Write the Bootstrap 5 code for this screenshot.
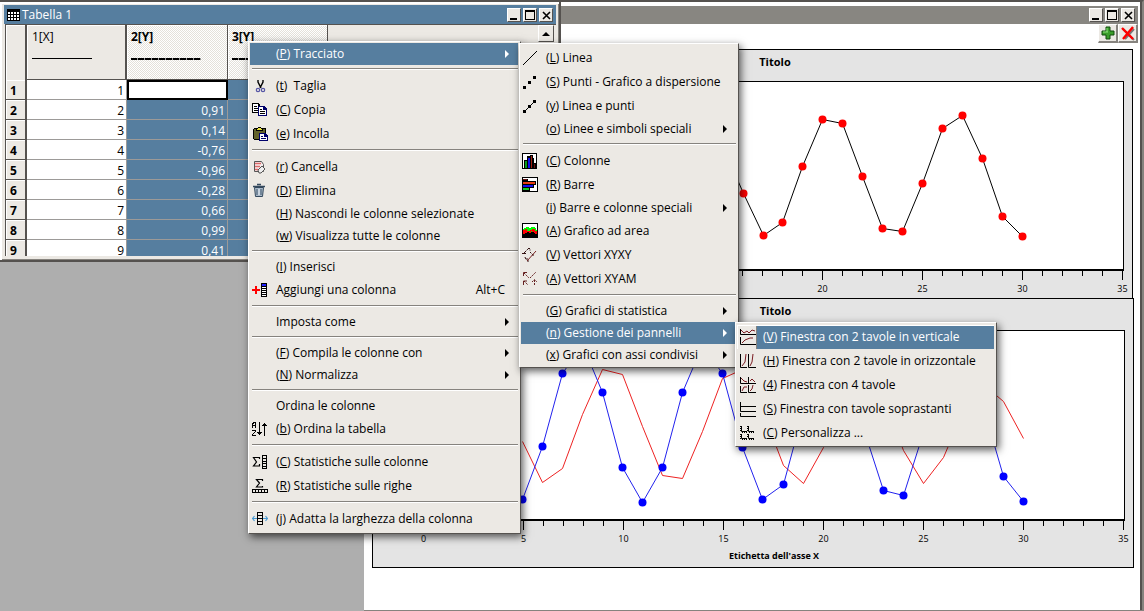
<!DOCTYPE html>
<html lang="it">
<head>
<meta charset="utf-8">
<meta name="viewport" content="width=device-width, initial-scale=1">
<title>Tabella 1</title>
<link href="https://cdn.jsdelivr.net/npm/bootstrap@5.3.0/dist/css/bootstrap.min.css" rel="stylesheet">
<style>
:root{--face:#ece9e4;--sel:#567e9f;--edge:#55524f;--shade:#86837e}
body{font-family:"Open Sans","Noto Sans",sans-serif;font-size:12px;line-height:20px;color:#000;background:#aeaeae}
.desktop{min-height:100vh}
svg{display:block;flex:none}
.win{position:absolute;top:0}
.win-table{left:0;width:561px;height:262px;background:var(--face);border:solid var(--edge);border-width:2px 2px 2px 0;box-shadow:inset 2px 2px 0 #fff,inset -1px -1px 0 var(--shade);padding:3px 3px 4px 4px;z-index:1}
.win-chart{left:364px;right:0;min-height:100vh;background:#fff;border-top:2px solid var(--edge);border-right:2px solid var(--shade);border-bottom:1px solid var(--shade);padding:4px 4px 0 8px}
.win-chart::after{content:"";position:absolute;top:0;bottom:0;right:0;width:2px;background:var(--edge)}
.titlebar{height:19px;color:#fff;padding:0 3px 0 2px;background:var(--sel)}
.titlebar.idle{background:#888681;margin-left:-8px;height:18px}
.caption-text{margin-left:2px}
.btn-row{gap:2px}
.wbtn,.tbtn{padding:0;border:1px solid;border-color:#fff var(--edge) var(--edge) #fff;background:var(--face);color:#000}
.wbtn{width:14px;height:14px}
.tbtn{width:20px;height:19px;border-width:1px 2px 2px 1px;border-color:#fff var(--shade) var(--shade) #fff}
.sheet{overflow:hidden;border:solid var(--edge);border-width:1px 0 0 1px;background:var(--face);margin-left:1px;min-height:0}
.grid{table-layout:fixed;width:322px;border-collapse:separate;border-spacing:0;flex:none}
.grid tbody th,.grid td{padding:2px 2px 0 0;height:20px;line-height:17px;overflow:hidden;white-space:nowrap}
.grid thead th{height:55px;vertical-align:top;padding:2px 0 0 5px;line-height:20px;border:solid var(--edge);border-width:0 2px 1px 0;box-shadow:inset 1px 1px 0 #fff;background:var(--face)}
.grid thead th.picked{border-right-width:1px;padding-left:4px;background:repeating-conic-gradient(#fff 0 25%,#e4e1da 0 50%) 0 0/2px 2px}
.grid thead th:first-child{border-bottom:0}
.grid tbody th{padding-left:4px;border:solid var(--edge);border-width:0 2px 1px 0;box-shadow:inset 1px 1px 0 #fff;background:var(--face)}
.grid td{text-align:right;background:#fff;border:solid #9c9a98;border-width:0 1px 1px 0}
.grid td.on{background:var(--sel);color:#fff}
.grid td.cursor{background:#fff;border:2px solid #000}
.rule-line{width:60px;height:1px;background:#000;margin-top:11px}
.picked .rule-line{width:70px;height:2px;background:repeating-linear-gradient(90deg,#000 0 6px,#999 6px 7px)}
.scroller{width:16px;height:17px;margin-right:2px}
.dropdown-menu.pop{min-width:0;padding:1px 2px 2px 1px;margin:0;border-radius:0;font-size:12px;color:#000;background:var(--face);border:1px solid;border-color:#fff var(--edge) var(--edge) #fff;box-shadow:2px 3px 8px rgba(0,0,0,.65)}
.pop .dropdown-item{display:flex;align-items:center;height:22px;padding:0 9px 0 2px;color:#000;line-height:20px;white-space:pre}
.pop .tall{height:24px}
.pop .dropdown-item.active{background:var(--sel);color:#fff}
.pop .pic{width:16px;height:16px;flex:none;margin-right:8px}
.pop .dropdown-divider{margin:3px 0 4px 2px;border-top:1px solid #86837e;border-bottom:1px solid #fff;opacity:1;height:2px}
.pop .arrow{margin-left:auto;width:0;height:0;border:solid transparent;border-width:4px 0 4px 4px;border-left-color:currentColor}
.m1{left:248px;top:41px;width:273px;z-index:10}
.m2{left:519px;top:43px;width:220px;z-index:11}
.m3{left:735px;top:322px;width:262px;z-index:12}
.dropdown-menu.m2,.dropdown-menu.m3{padding-top:2px;padding-bottom:1px}
.m2 .dropdown-item,.m3 .dropdown-item{padding-left:1px}
.m3 .pic{margin:0 7px 0 2px}
.m3 .dropdown-item.active{background:linear-gradient(90deg,var(--face) 19px,var(--shade) 19px,var(--shade) 20px,var(--sel) 20px);box-shadow:inset 1px 1px 0 #fff}
.panels{padding:6px 4px 0 0}
.panel{border:1px solid #000;background:#e4e4e4}
.panel.first{border-bottom:0;margin-right:1px}
.panel h2{font-size:11px;font-weight:700;line-height:20px;margin:0;text-align:center;padding:2px 0 9px 45px}
.axis-name{font-size:9px;font-weight:700;line-height:14px;text-align:center;padding:2px 0 4px 42px}
.chart{width:100%;height:auto}
.chart text{font-size:9px;text-anchor:middle}
</style>
</head>
<body>
<main class="desktop position-relative overflow-hidden">

<section class="win win-chart" aria-label="Grafico">
  <header class="titlebar idle d-flex justify-content-end align-items-center">
    <div class="btn-row d-flex">
      <button class="wbtn" aria-label="Riduci"><svg width="12" height="12"><path d="M2 9h7v2h-7z"/></svg></button>
      <button class="wbtn" aria-label="Ingrandisci"><svg width="12" height="12"><path fill-rule="evenodd" d="M1 1h10v10H1zM2 3v7h8V3z"/></svg></button>
      <button class="wbtn" aria-label="Chiudi"><svg width="12" height="12"><path d="M3 3l7 7M10 3l-7 7" stroke="#000" stroke-width="1.6"/></svg></button>
    </div>
  </header>
  <div class="d-flex justify-content-end">
    <button class="tbtn" aria-label="Aggiungi"><svg width="17" height="16"><path d="M7 2h4v4h4v4h-4v4H7v-4H3V6h4z" fill="#3a9e2a" stroke="#114a0c"/><path d="M8 7V3M4 7h5" stroke="#8be07a"/></svg></button>
    <button class="tbtn" aria-label="Elimina"><svg width="17" height="16"><path d="M4 4l11 11M15 4L6 14" stroke="#777" stroke-width="2"/><path d="M3 3l11 11M14 2L4 14" stroke="#f00" stroke-width="2.4"/></svg></button>
  </div>
  <div class="panels">
    <article class="panel first">
      <h2>Titolo</h2>
      <svg class="chart" viewBox="373 81 759 217" data-base="269" data-right="1123" data-labels="292" data-label-from="20">
        <g data-line="#000" data-dots="#f00" data-points="702,130 722,145 743,193 763,235 782,222 802,166 822,119 842,123 862,176 882,228 902,231 922,183 942,128 962,115 982,158 1002,216 1022,236"></g>
      </svg>
    </article>
    <article class="panel">
      <h2>Titolo</h2>
      <svg class="chart" viewBox="373 330 760 217" data-base="519" data-right="1124" data-labels="542" data-label-from="0">
        <g data-line="#e22" data-points="522,441 542,482 562,468 582,414 602,369 622,374 642,426 662,475 682,478 702,431 722,378 742,369 762,410 783,465 803,483 823,447 843,400 863,372 883,398 903,450 923,483 943,457 963,410 983,384 1003,401 1023,438"></g>
        <g data-line="#22e" data-dots="#00f" data-points="522,499 542,446 562,373 582,344 602,392 622,467 642,502 662,467 682,392 702,345 722,373 742,447 762,499 783,484 803,410 823,360 843,362 863,428 883,490 903,495 923,432 943,372 963,355 983,407 1003,476 1023,501"></g>
      </svg>
      <div class="axis-name">Etichetta dell'asse X</div>
    </article>
  </div>
</section>

<section class="win win-table d-flex flex-column" aria-label="Tabella 1">
  <header class="titlebar d-flex align-items-center">
    <svg width="14" height="14" shape-rendering="crispEdges"><path d="M1 1h13v12H1z"/><path fill="#fff" d="M2 4h2v2H2zM5 4h2v2H5zM8 4h2v2H8zM11 4h2v2h-2zM2 7h2v2H2zM5 7h2v2H5zM8 7h2v2H8zM11 7h2v2h-2zM2 10h2v2H2zM5 10h2v2H5zM8 10h2v2H8zM11 10h2v2h-2z"/></svg>
    <span class="caption-text me-auto">Tabella 1</span>
    <div class="btn-row d-flex">
      <button class="wbtn" aria-label="Riduci"><svg width="12" height="12"><path d="M2 9h7v2h-7z"/></svg></button>
      <button class="wbtn" aria-label="Ingrandisci"><svg width="12" height="12"><path fill-rule="evenodd" d="M1 1h10v10H1zM2 3v7h8V3z"/></svg></button>
      <button class="wbtn" aria-label="Chiudi"><svg width="12" height="12"><path d="M3 3l7 7M10 3l-7 7" stroke="#000" stroke-width="1.6"/></svg></button>
    </div>
  </header>
  <div class="sheet d-flex flex-grow-1 justify-content-between align-items-start">
    <table class="grid">
      <colgroup><col style="width:21px"><col style="width:100px"><col style="width:101px"><col style="width:100px"></colgroup>
      <thead><tr><th></th><th class="fw-normal">1[X]<div class="rule-line"></div></th><th class="picked">2[Y]<div class="rule-line"></div></th><th class="picked">3[Y]<div class="rule-line"></div></th></tr></thead>
      <tbody>
        <tr><th>1</th><td>1</td><td class="cursor"></td><td class="on"></td></tr>
        <tr><th>2</th><td>2</td><td class="on">0,91</td><td class="on"></td></tr>
        <tr><th>3</th><td>3</td><td class="on">0,14</td><td class="on"></td></tr>
        <tr><th>4</th><td>4</td><td class="on">-0,76</td><td class="on"></td></tr>
        <tr><th>5</th><td>5</td><td class="on">-0,96</td><td class="on"></td></tr>
        <tr><th>6</th><td>6</td><td class="on">-0,28</td><td class="on"></td></tr>
        <tr><th>7</th><td>7</td><td class="on">0,66</td><td class="on"></td></tr>
        <tr><th>8</th><td>8</td><td class="on">0,99</td><td class="on"></td></tr>
        <tr><th>9</th><td>9</td><td class="on">0,41</td><td class="on"></td></tr>
      </tbody>
    </table>
    <button class="wbtn scroller" aria-label="Scorri in alto"><svg width="14" height="14"><path d="M3 9l4-4 4 4z"/></svg></button>
  </div>
</section>

<ul class="dropdown-menu show pop m1">
  <li><button class="dropdown-item active"><span class="pic"></span>(<u>P</u>) Tracciato<i class="arrow"></i></button></li>
  <li><hr class="dropdown-divider"></li>
  <li><button class="dropdown-item tall"><svg class="pic" viewBox="0 0 16 16" fill="none"><path d="M6 2v2l3 6M11 2v2L8 10" stroke="#000" stroke-width="1.4"/><circle cx="6" cy="12" r="1.7" stroke="#5555a5" stroke-width="1.2"/><circle cx="11" cy="12" r="1.7" stroke="#5555a5" stroke-width="1.2"/></svg>(<u>t</u>)  Taglia</button></li>
  <li><button class="dropdown-item tall"><svg class="pic" viewBox="0 0 16 16" shape-rendering="crispEdges"><path d="M0 1h6l2 2v8H0z"/><path fill="#fff" d="M1 2h5v2h1v6H1z"/><path d="M2 4h3v1H2zM2 6h4v1H2zM2 8h4v1H2z"/><path fill="#00006a" d="M6 4h6l3 3v7H6z"/><path fill="#fff" d="M7 5h4v3h3v5H7z"/><path d="M8 7h2v1H8zM8 9h5v1H8zM8 11h5v1H8z"/></svg>(<u>C</u>) Copia</button></li>
  <li><button class="dropdown-item tall"><svg class="pic" viewBox="0 0 16 16" shape-rendering="crispEdges"><path d="M1 3l1-1h11l1 1v10l-1 1H2l-1-1z"/><path fill="#62622a" d="M2 3h11v10H2z"/><path d="M4 2h2V1h3v1h2v3H4z"/><path fill="#e9e33d" d="M5 3h1V2h3v1h1v1H5z"/><path fill="#00006a" d="M7 7h6l3 3v5H7z"/><path fill="#fff" d="M8 8h4v3h3v3H8z"/><path fill="#00006a" d="M9 10h2v1H9zM9 12h5v1H9z"/></svg>(<u>e</u>) Incolla</button></li>
  <li><hr class="dropdown-divider"></li>
  <li><button class="dropdown-item tall"><svg class="pic" viewBox="0 0 16 16"><path d="M2.500 2.500h7l2 3v7h-9z" fill="#f7ecec" stroke="#555"/><path d="M3 4.500h6M3 7.500h5M3 10.500h3" stroke="#dd6868" stroke-width="1.4"/><path d="M6 11l4-4 3 3-4 4H7z" fill="#eee" stroke="#555"/></svg>(<u>r</u>) Cancella</button></li>
  <li><button class="dropdown-item tall"><svg class="pic" viewBox="0 0 16 16"><path d="M2.500 4.500h9l-1 9h-7z" fill="#a9b8c8" stroke="#34495d"/><path d="M1 3.500h12M5 1.500h4" stroke="#34495d" stroke-width="1.4"/><path d="M5 6v6M9 6v6" stroke="#3e566c"/><path d="M7 6v6" stroke="#e5edf5"/></svg>(<u>D</u>) Elimina</button></li>
  <li><button class="dropdown-item"><span class="pic"></span>(<u>H</u>) Nascondi le colonne selezionate</button></li>
  <li><button class="dropdown-item"><span class="pic"></span>(<u>w</u>) Visualizza tutte le colonne</button></li>
  <li><hr class="dropdown-divider"></li>
  <li><button class="dropdown-item"><span class="pic"></span>(<u>I</u>) Inserisci</button></li>
  <li><button class="dropdown-item tall"><svg class="pic" viewBox="0 0 16 16" shape-rendering="crispEdges"><path fill="#f00" d="M0 7h3V4h2v3h3v2H5v3H3V9H0z"/><path d="M9 1h6v14H9z"/><path fill="#22f" d="M10 2h4v2h-4z"/><path fill="#fff" d="M10 5h4v1h-4zM10 7h4v1h-4zM10 9h4v1h-4zM10 11h4v1h-4zM10 13h4v1h-4z"/></svg>Aggiungi una colonna<span class="ms-auto me-1">Alt+C</span></button></li>
  <li><hr class="dropdown-divider"></li>
  <li><button class="dropdown-item"><span class="pic"></span>Imposta come<i class="arrow"></i></button></li>
  <li><hr class="dropdown-divider"></li>
  <li><button class="dropdown-item"><span class="pic"></span>(<u>F</u>) Compila le colonne con<i class="arrow"></i></button></li>
  <li><button class="dropdown-item"><span class="pic"></span>(<u>N</u>) Normalizza<i class="arrow"></i></button></li>
  <li><hr class="dropdown-divider"></li>
  <li><button class="dropdown-item"><span class="pic"></span>Ordina le colonne</button></li>
  <li><button class="dropdown-item tall"><svg class="pic" viewBox="0 0 16 16" shape-rendering="crispEdges" fill="none" stroke="#000"><path d="M.5 7V2.500h.5V1.500h2v1h.5V7M1 4.500h2M0 9.500h4M3.500 10v1M2.500 11v1M1.500 12v1M.5 13v1M0 14.500h4M7.500 1v13M12.500 2v13M5 11.500h5M6 12.500h3M10 4.500h5M11 3.500h3"/></svg>(<u>b</u>) Ordina la tabella</button></li>
  <li><hr class="dropdown-divider"></li>
  <li><button class="dropdown-item tall"><svg class="pic" viewBox="0 0 16 16" fill="none" stroke="#000"><path d="M7.500 5V3.500H1.500l3 4.500-3 4H7.500V10" stroke-width="1.2"/><path shape-rendering="crispEdges" d="M10.500 1.500h4v13h-4zM10 4.500h5M10 7.500h5M10 9.500h5M10 12.500h5"/></svg>(<u>C</u>) Statistiche sulle colonne</button></li>
  <li><button class="dropdown-item tall"><svg class="pic" viewBox="0 0 16 16" fill="none" stroke="#000"><path d="M10.500 3V1.500h-6l3 3.500-3 4h6V8" stroke-width="1.2"/><path shape-rendering="crispEdges" d="M.5 11.500h15v3H.5zM3.500 11v4M6.500 11v4M9.500 11v4M12.500 11v4"/></svg>(<u>R</u>) Statistiche sulle righe</button></li>
  <li><hr class="dropdown-divider"></li>
  <li><button class="dropdown-item tall"><svg class="pic" viewBox="0 0 16 16" fill="none"><path d="M0 7.500h5M11 7.500h5M2.500 5L.5 7.500l2 2.500M13.500 5l2 2.500-2 2.500" stroke="#4b9bd3" stroke-width="1.2"/><path shape-rendering="crispEdges" stroke="#000" d="M5.500 1.500h5v12h-5zM5 4.500h6M5 7.500h6M5 10.500h6"/></svg>(<u>j</u>) Adatta la larghezza della colonna</button></li>
</ul>

<ul class="dropdown-menu show pop m2">
  <li><button class="dropdown-item tall"><svg class="pic" viewBox="0 0 16 16"><path d="M1 15L15 1" stroke="#000"/></svg>(<u>L</u>) Linea</button></li>
  <li><button class="dropdown-item tall"><svg class="pic" viewBox="0 0 16 16" shape-rendering="crispEdges"><path d="M1 12h3v3H1zM6 7h3v3H6zM11 2h3v3h-3z"/></svg>(<u>S</u>) Punti - Grafico a dispersione</button></li>
  <li><button class="dropdown-item tall"><svg class="pic" viewBox="0 0 16 16"><path d="M1 12h3v3H1zM6 7h3v3H6zM11 2h3v3h-3z" shape-rendering="crispEdges"/><path d="M2 14L13 3" stroke="#000"/></svg>(<u>y</u>) Linea e punti</button></li>
  <li><button class="dropdown-item"><span class="pic"></span>(<u>o</u>) Linee e simboli speciali<i class="arrow"></i></button></li>
  <li><hr class="dropdown-divider"></li>
  <li><button class="dropdown-item tall"><svg class="pic" viewBox="0 0 16 16" shape-rendering="crispEdges"><path d="M0 0h15v16H0z"/><path fill="#fff" d="M1 1h13v14H1z"/><path d="M2 7h3V3h3V2h3v3h1v5h2v5H2z"/><path fill="#0a9a1c" d="M3 8h2v7H3z"/><path fill="#11e" d="M6 5h2v10H6z"/><path fill="#a31e10" d="M9 3h1v12H9z"/><path fill="#611" d="M12 11h1v4h-1z"/></svg>(<u>C</u>) Colonne</button></li>
  <li><button class="dropdown-item tall"><svg class="pic" viewBox="0 0 16 16" shape-rendering="crispEdges"><path d="M0 0h16v15H0z"/><path fill="#fff" d="M1 1h14v13H1z"/><path d="M1 2h5v2h8v4h-2v3H8v3H1z"/><path fill="#611" d="M1 2h4v1H1z"/><path fill="#e93d10" d="M1 5h12v2H1z"/><path fill="#11e" d="M1 8h10v2H1z"/><path fill="#1c2" d="M1 11h6v2H1z"/></svg>(<u>R</u>) Barre</button></li>
  <li><button class="dropdown-item"><span class="pic"></span>(<u>i</u>) Barre e colonne speciali<i class="arrow"></i></button></li>
  <li><button class="dropdown-item tall"><svg class="pic" viewBox="0 0 16 16" shape-rendering="crispEdges"><path d="M0 0h16v15H0z"/><path fill="#fff" d="M1 1h14v6H1z"/><path fill="#0f0" d="M1 8V6h1V5h2V4h3v1h2V4h4v1h1v2h1v2H1z"/><path fill="#f00" d="M1 7h2V6h2v2h3V7h2V6h3v2h2v3h-2v-1h-1V9h-2V8H9v2H7V9H5v1H3v1H1z"/></svg>(<u>A</u>) Grafico ad area</button></li>
  <li><button class="dropdown-item tall"><svg class="pic" viewBox="0 0 16 16" fill="none"><path d="M0 6.500h4M2.500 5v3M3 5l3-3M6 1.500h2v2M8 5l3 3M11 9V6M5 11v3h3M3 10l1 3" stroke="#311" stroke-dasharray="2 1"/><path d="M5 14l9-10" stroke="#722"/></svg>(<u>V</u>) Vettori XYXY</button></li>
  <li><button class="dropdown-item tall"><svg class="pic" viewBox="0 0 16 16" fill="none" stroke="#622"><path d="M1.500 5V1.500H5M1.500 14v-4H5"/><path d="M2 2l5 5M8 7l6-6M2 10l4 4M12.500 9v6M10 11l2.500-2.500L15 11" stroke-dasharray="2 1"/></svg>(<u>A</u>) Vettori XYAM</button></li>
  <li><hr class="dropdown-divider"></li>
  <li><button class="dropdown-item"><span class="pic"></span>(<u>G</u>) Grafici di statistica<i class="arrow"></i></button></li>
  <li><button class="dropdown-item active"><span class="pic"></span>(<u>n</u>) Gestione dei pannelli<i class="arrow"></i></button></li>
  <li><button class="dropdown-item"><span class="pic"></span>(<u>x</u>) Grafici con assi condivisi<i class="arrow"></i></button></li>
</ul>

<ul class="dropdown-menu show pop m3">
  <li><button class="dropdown-item tall active"><svg class="pic" viewBox="0 0 16 16" fill="none"><path d="M.5 0v5.500H16M.5 8v7.500H16" stroke="#000"/><path d="M1 1l3 3 3-2 2 2 3-3 3 1M2 14l3-3 5-2h3" stroke="#7a1c22"/></svg>(<u>V</u>) Finestra con 2 tavole in verticale</button></li>
  <li><button class="dropdown-item tall"><svg class="pic" viewBox="0 0 16 16" fill="none"><path d="M.5 1v13.500H7M8.500 1v13.500H16" stroke="#000"/><path d="M2 13l3-4 1-8M10 13l2-4 1-8" stroke="#7a1c22"/></svg>(<u>H</u>) Finestra con 2 tavole in orizzontale</button></li>
  <li><button class="dropdown-item tall"><svg class="pic" viewBox="0 0 16 16" fill="none"><path d="M.5 0v6.500H16M.5 9v6.500H7M8.500 0v6.500M8.500 8v7.500H16" stroke="#000"/><path d="M1 1l3 3 3 1M10 4l2-2 3 3M2 14l2-4h3M10 14l2-2 1-4" stroke="#7a1c22"/></svg>(<u>4</u>) Finestra con 4 tavole</button></li>
  <li><button class="dropdown-item tall"><svg class="pic" viewBox="0 0 16 16" fill="none"><path d="M.5 1v4.500H16M.5 5v5.500H16M.5 12v3.500H16" stroke="#000"/></svg>(<u>S</u>) Finestra con tavole soprastanti</button></li>
  <li><button class="dropdown-item tall"><svg class="pic" viewBox="0 0 16 16" fill="none"><path d="M1.500 1v5.500H7M8.500 1v5.500H14M1.500 9v4.500H7M8.500 9v4.500H14" stroke="#000"/><path d="M.5 1v6M7.500 1v5M.5 9v5M7.500 9v4M2 7.500h5M9 7.500h6M2 14.500h5M9 14.500h6" stroke="#000" stroke-dasharray="1 1"/></svg>(<u>C</u>) Personalizza ...</button></li>
</ul>
</main>

<script src="https://cdn.jsdelivr.net/npm/bootstrap@5.3.0/dist/js/bootstrap.bundle.min.js"></script>
<script>
// Draws frame, axis ticks, tick labels and data series of each chart.
document.querySelectorAll('.chart').forEach(svg => {
  const base = +svg.dataset.base, right = +svg.dataset.right, top = svg.viewBox.baseVal.y;
  let frame = `<rect x="422.5" y="${top + .5}" width="${right - 422}" height="${base - top}" fill="#fff" stroke="#000"/>` +
              `<path d="M422 ${base + 1}H${right + 1}" stroke="#000" stroke-width="2"/>`;
  for (let i = 0; i <= 35; i++) {
    const x = right - 1 - (35 - i) * 20 + .5;
    frame += `<path d="M${x} ${base}v${i % 5 ? 7 : 11}" stroke="#000"/>`;
    if (i % 5 === 0 && i >= +svg.dataset.labelFrom) frame += `<text x="${x}" y="${+svg.dataset.labels}">${i}</text>`;
  }
  svg.querySelectorAll('g').forEach(g => {
    const pts = g.dataset.points.split(' ').map(p => p.split(',').map(v => +v + .5));
    let out = `<polyline points="${pts.join(' ')}" fill="none" stroke="${g.dataset.line}"/>`;
    if (g.dataset.dots) pts.forEach(p => out += `<circle cx="${p[0]}" cy="${p[1]}" r="4" fill="${g.dataset.dots}"/>`);
    g.innerHTML = out;
  });
  svg.insertAdjacentHTML('afterbegin', frame);
});
</script>
</body>
</html>
